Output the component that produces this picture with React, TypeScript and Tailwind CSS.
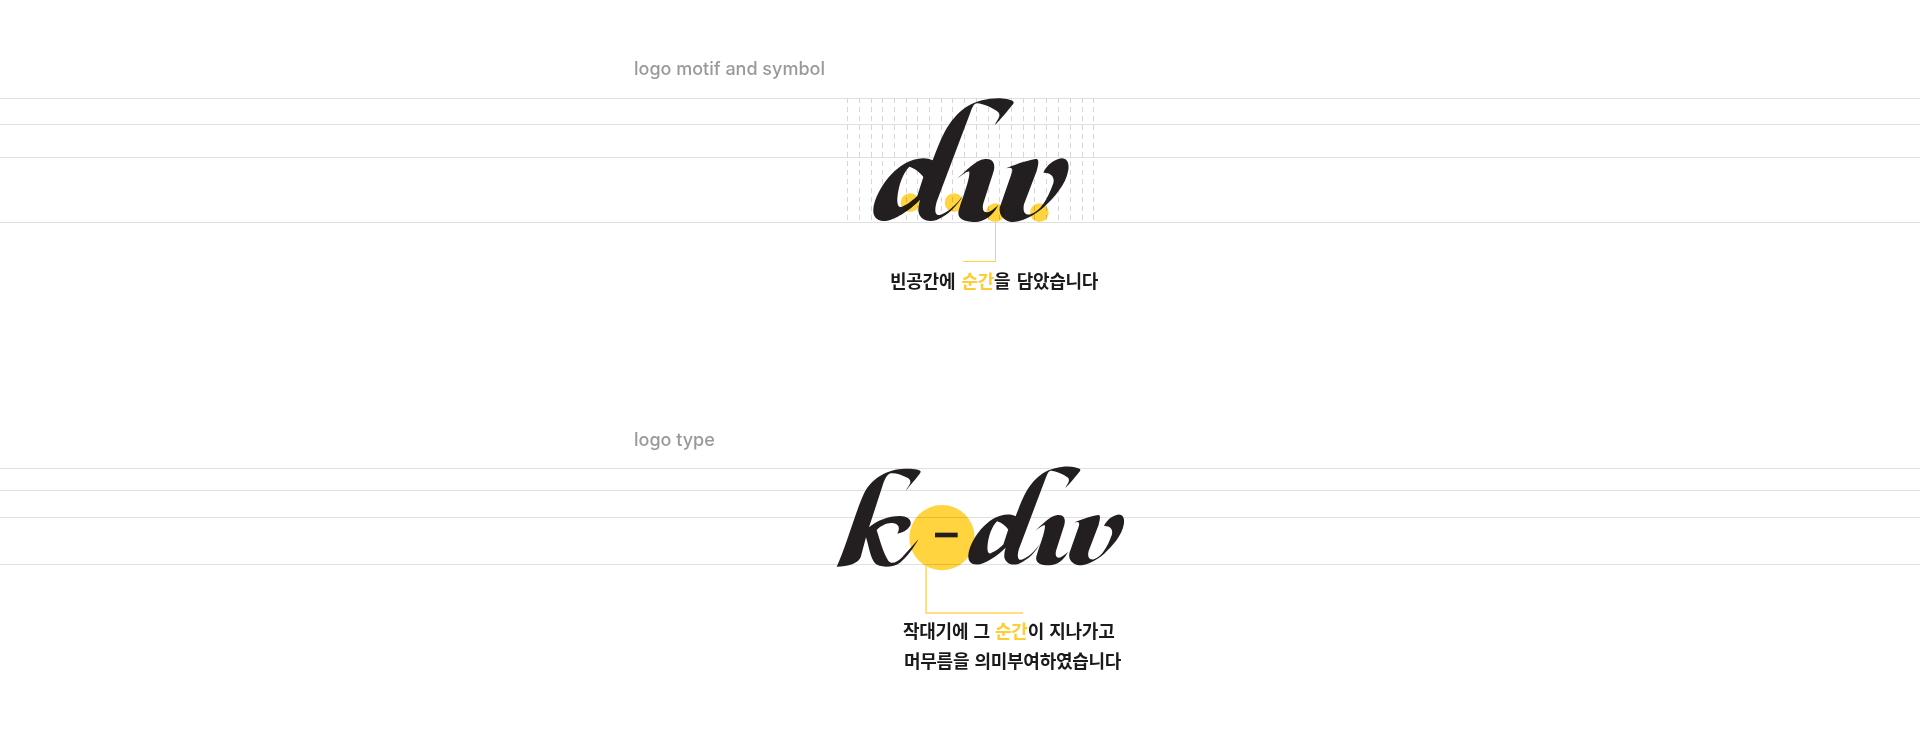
const guideXs = [847, 859, 871, 882, 894, 906, 917, 929, 941, 952, 964, 976, 988, 999, 1011, 1023, 1034, 1046, 1058, 1070, 1082, 1093];

// the "diw" part of the logo, traced on a 900x450 box
const DiwMark = () => (
  <g fill="#231f20" fillRule="evenodd">
    <path d="M160 372C165 320 230 220 310 220C320 220 330 222 338 226C360 170 380 105 440 65C475 42 530 35 560 42C578 46 584 50 580 56C565 75 540 105 525 120C530 105 545 95 535 82C515 66 490 57 472 55C462 55 458 65 452 80L350 350C342 380 346 392 360 390C385 382 410 358 430 330C412 362 388 388 350 405C320 415 295 400 295 375C295 365 297 355 300 345C270 375 220 410 190 408C170 407 158 395 160 372ZM232 340C235 300 250 262 268 245C285 250 300 262 310 276L292 332C275 350 255 362 243 366C234 368 231 355 232 340Z" />
    <path d="M412 280C435 262 465 225 495 222C520 219 528 238 520 262L490 355C486 372 490 382 500 382C510 382 522 372 535 360C525 380 505 405 475 410C445 414 414 405 415 385C416 365 450 290 448 260C440 258 430 268 412 280Z" />
    <path d="M558 250C585 238 635 222 650 222C658 224 655 240 650 258L612 358C606 382 618 392 632 388C660 380 682 345 700 295C705 275 692 262 670 263C680 240 705 222 725 220C742 220 748 235 745 255C738 300 700 340 672 366C640 395 595 415 570 410C545 403 536 385 540 365L575 265C580 250 575 245 558 250Z" />
  </g>
);

const Rule = () => <div className="h-px w-full shrink-0 bg-[#e0e0e0]" />;

const App = () => {
  return (
    <div className="h-[745px] w-full overflow-hidden bg-white font-['Inter','Noto_Sans_CJK_KR',sans-serif]">
      <p className="ml-[634px] pt-[55px] text-[18px] font-[450] leading-[28px] text-[#999999]">logo motif and symbol</p>

      <div className="relative mt-[15px] flex flex-col">
        <Rule />
        <div className="mt-[25px]"><Rule /></div>
        <div className="mt-[32px]"><Rule /></div>
        <div className="mt-[64px]"><Rule /></div>

        <svg className="absolute left-[820px] top-[-13px]" width="300" height="150" viewBox="0 0 900 450">
          {guideXs.map((x) => (
            <line key={x} x1={(x - 820) * 3 + 1.5} x2={(x - 820) * 3 + 1.5} y1="39" y2="414" stroke="#d6d6d6" strokeWidth="3" strokeDasharray="15 12" />
          ))}
          <DiwMark />
          <g fill="#ffd43f" className="mix-blend-multiply">
            <circle cx="270" cy="353" r="28" />
            <circle cx="402" cy="353" r="28" />
            <circle cx="526" cy="383" r="28" />
            <circle cx="658" cy="383" r="28" />
          </g>
        </svg>
        <div className="absolute left-[963px] top-[124px] h-[40px] w-[33px] border-b border-r border-[#ffd43f]" />
      </div>

      <p className="ml-[890px] mt-[44px] text-[18px] font-semibold leading-[30px] tracking-[-0.26px] text-[#1a1a1a] [word-spacing:2px]">
        빈공간에 <span className="text-[#ffcc33]">순간</span>을 담았습니다
      </p>

      <p className="ml-[634px] mt-[129px] text-[18px] font-[450] leading-[28px] text-[#999999]">logo type</p>

      <div className="relative mt-[14px] flex flex-col">
        <Rule />
        <div className="mt-[21px]"><Rule /></div>
        <div className="mt-[26px]"><Rule /></div>
        <div className="mt-[46px]"><Rule /></div>

        <svg className="absolute left-[820px] top-[-18px]" width="320" height="160" viewBox="0 0 960 480">
          <path
            fill="#231f20"
            d="M50 350C75 300 105 190 130 135C150 90 195 60 245 57C275 55 303 58 302 66C295 80 270 105 258 122C263 108 280 98 265 85C245 74 225 68 212 70C202 72 196 85 190 100L147 232C170 212 205 198 240 198C264 198 278 212 270 228C262 240 250 248 232 251C240 235 238 224 222 220C205 216 185 225 170 240C178 265 190 310 205 332C215 345 232 335 245 323C262 305 280 285 296 267C280 295 262 320 240 338C222 352 180 355 165 340C150 320 148 295 138 262L122 322C115 340 85 350 50 350Z"
          />
          <g transform="translate(317.3 18.1) scale(0.798)">
            <DiwMark />
          </g>
          <circle cx="366" cy="263" r="98" fill="#ffd43f" className="mix-blend-multiply" />
          <rect x="345" y="248" width="68" height="14" fill="#231f20" />
        </svg>
        <div className="absolute left-[925px] top-[98px] h-[48px] w-[98px] border-b-2 border-l-2 border-[#ffe07f]" />
      </div>

      <div className="ml-[903px] mt-[52px] text-[18px] font-semibold leading-[30px] tracking-[-0.26px] text-[#1a1a1a] [word-spacing:1px]">
        <p>작대기에 그 <span className="text-[#ffcc33]">순간</span>이 지나가고</p>
        <p className="pl-px">머무름을 의미부여하였습니다</p>
      </div>
    </div>
  );
};

export default App;
